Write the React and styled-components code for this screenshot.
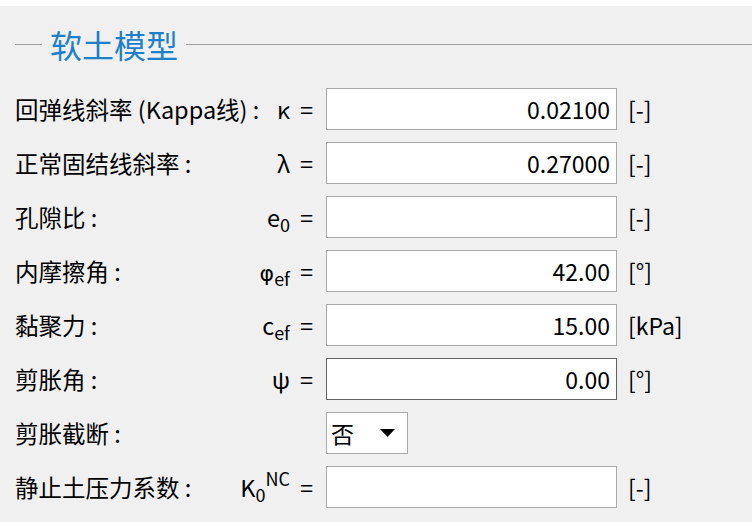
import React from "react";
import styled, { createGlobalStyle } from "styled-components";

const Global = createGlobalStyle`
  html, body {
    margin: 0;
    padding: 0;
    background: #ffffff;
  }
  body {
    font-family: "Noto Sans CJK SC", "Noto Sans", sans-serif;
    color: #000;
  }
`;

const Panel = styled.div`
  margin-top: 6px;
  background: #f0f0f0;
  height: 516px;
  box-sizing: border-box;
  padding: 0 0 0 15px;
  overflow: hidden;
`;

const Header = styled.div`
  display: flex;
  align-items: center;
  height: 78px;
  gap: 8px;
`;

const Rule = styled.div`
  height: 1px;
  background: #a0a0a0;
  flex: ${(p) => (p.$grow ? 1 : "0 0 27px")};
  margin-top: -2px;
`;

const Title = styled.h2`
  margin: -2px 0 0;
  font-size: 32px;
  font-weight: 400;
  color: #1e80c8;
  line-height: 1;
`;

const Rows = styled.div`
  display: flex;
  flex-direction: column;
  gap: 12px;
  margin-top: 4px;
`;

const Row = styled.div`
  display: flex;
  align-items: center;
  height: 42px;
`;

const LabelCell = styled.div`
  width: 298px;
  display: flex;
  justify-content: space-between;
  align-items: center;
  font-size: 23.5px;
  white-space: nowrap;
`;

const Symbol = styled.span`
  white-space: nowrap;
`;

const Phi = styled.span`
  font-family: "DejaVu Sans", sans-serif;
  font-size: 22px;
`;

const Sub = styled.span`
  font-size: 18px;
  position: relative;
  top: 5px;
`;

const Sup = styled.span`
  font-size: 18px;
  position: relative;
  top: -11px;
`;

const Eq = styled.span`
  margin-left: 10px;
`;

const Input = styled.div`
  margin-left: 13px;
  width: 291px;
  height: 42px;
  box-sizing: border-box;
  background: #fff;
  border: 1px solid ${(p) => (p.$active ? "#646464" : "#a9a9a9")};
  display: flex;
  align-items: center;
  justify-content: flex-end;
  padding-right: 6px;
  font-size: 23px;
`;

const Unit = styled.span`
  margin-left: 11px;
  font-size: 23px;
`;

const Select = styled.div`
  margin-left: 13px;
  width: 82px;
  height: 42px;
  box-sizing: border-box;
  background: #fff;
  border: 1px solid #a9a9a9;
  display: flex;
  align-items: center;
  justify-content: space-between;
  padding: 0 12px 0 4px;
  font-size: 23px;
`;

const Caret = () => (
  <svg width="15" height="8" viewBox="0 0 15 8">
    <path d="M0 0 L15 0 L7.5 8 Z" fill="#000" />
  </svg>
);

const rows = [
  { label: "回弹线斜率 (Kappa线) :", sym: <>κ</>, value: "0.02100", unit: "[-]" },
  { label: "正常固结线斜率 :", sym: <>λ</>, value: "0.27000", unit: "[-]" },
  { label: "孔隙比 :", sym: <>e<Sub>0</Sub></>, value: "", unit: "[-]" },
  { label: "内摩擦角 :", sym: <><Phi>φ</Phi><Sub>ef</Sub></>, value: "42.00", unit: "[°]" },
  { label: "黏聚力 :", sym: <>c<Sub>ef</Sub></>, value: "15.00", unit: "[kPa]" },
  { label: "剪胀角 :", sym: <>ψ</>, value: "0.00", unit: "[°]", active: true },
  { label: "剪胀截断 :", select: "否" },
  { label: "静止土压力系数 :", sym: <>K<Sub>0</Sub><Sup>NC</Sup></>, value: "", unit: "[-]" },
];

export default function App() {
  return (
    <>
      <Global />
      <Panel>
        <Header>
          <Rule />
          <Title>软土模型</Title>
          <Rule $grow />
        </Header>
        <Rows>
          {rows.map((r) => (
            <Row key={r.label}>
              <LabelCell>
                <span>{r.label}</span>
                {r.sym && (
                  <Symbol>
                    {r.sym}
                    <Eq>=</Eq>
                  </Symbol>
                )}
              </LabelCell>
              {r.select ? (
                <Select>
                  <span>{r.select}</span>
                  <Caret />
                </Select>
              ) : (
                <>
                  <Input $active={r.active}>{r.value}</Input>
                  <Unit>{r.unit}</Unit>
                </>
              )}
            </Row>
          ))}
        </Rows>
      </Panel>
    </>
  );
}
